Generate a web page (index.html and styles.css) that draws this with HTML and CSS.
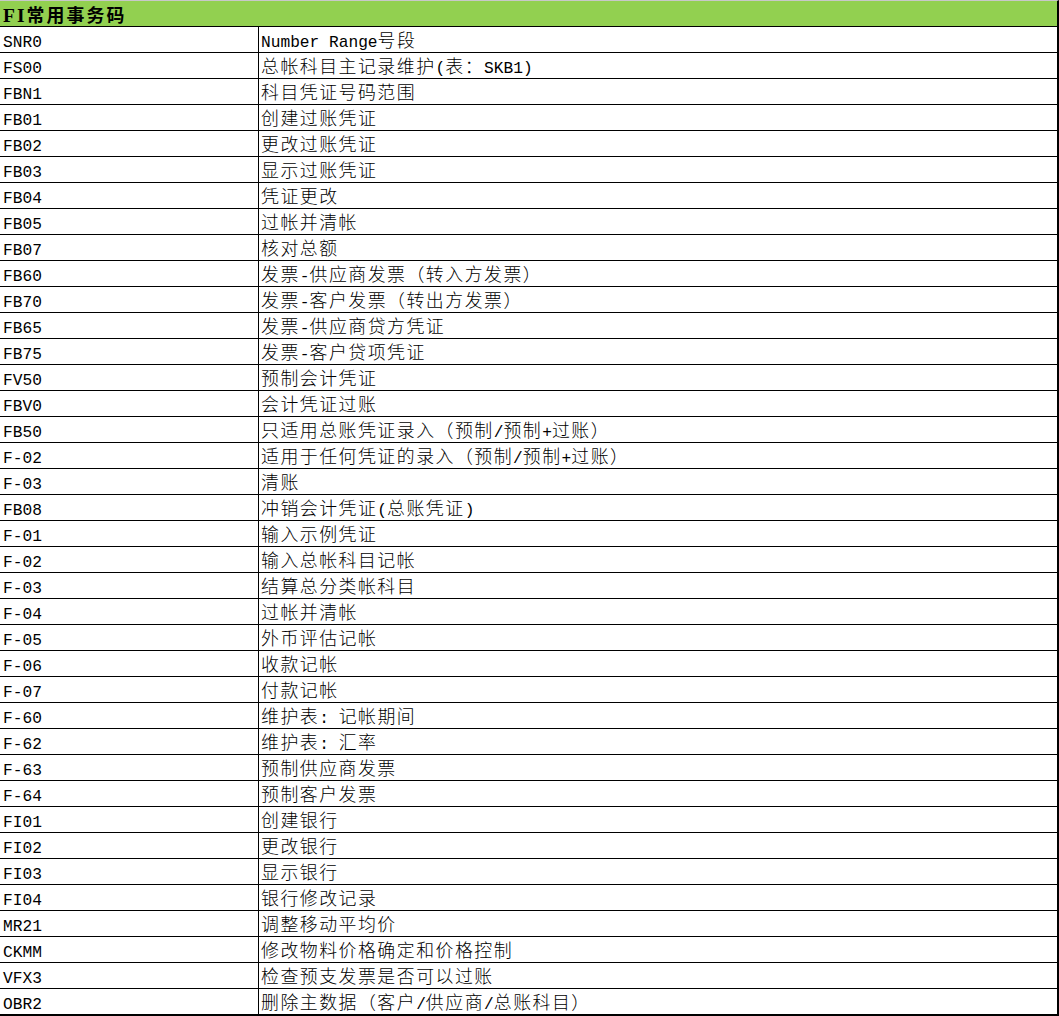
FILE: index.html
```html
<!DOCTYPE html>
<html lang="zh-CN">
<head>
<meta charset="utf-8">
<title>FI常用事务码</title>
<link rel="stylesheet" href="styles.css">
</head>
<body>
<div class="sheet">
  <div class="title"><span class="lat">FI</span>常用事务码</div>
  <div class="row"><div class="code">SNR0</div><div class="desc">Number Range<span class="z">号段</span></div></div>
  <div class="row"><div class="code">FS00</div><div class="desc"><span class="z">总帐科目主记录维护</span>(<span class="z">表：</span>SKB1)</div></div>
  <div class="row"><div class="code">FBN1</div><div class="desc"><span class="z">科目凭证号码范围</span></div></div>
  <div class="row"><div class="code">FB01</div><div class="desc"><span class="z">创建过账凭证</span></div></div>
  <div class="row"><div class="code">FB02</div><div class="desc"><span class="z">更改过账凭证</span></div></div>
  <div class="row"><div class="code">FB03</div><div class="desc"><span class="z">显示过账凭证</span></div></div>
  <div class="row"><div class="code">FB04</div><div class="desc"><span class="z">凭证更改</span></div></div>
  <div class="row"><div class="code">FB05</div><div class="desc"><span class="z">过帐并清帐</span></div></div>
  <div class="row"><div class="code">FB07</div><div class="desc"><span class="z">核对总额</span></div></div>
  <div class="row"><div class="code">FB60</div><div class="desc"><span class="z">发票</span>-<span class="z">供应商发票（转入方发票）</span></div></div>
  <div class="row"><div class="code">FB70</div><div class="desc"><span class="z">发票</span>-<span class="z">客户发票（转出方发票）</span></div></div>
  <div class="row"><div class="code">FB65</div><div class="desc"><span class="z">发票</span>-<span class="z">供应商贷方凭证</span></div></div>
  <div class="row"><div class="code">FB75</div><div class="desc"><span class="z">发票</span>-<span class="z">客户贷项凭证</span></div></div>
  <div class="row"><div class="code">FV50</div><div class="desc"><span class="z">预制会计凭证</span></div></div>
  <div class="row"><div class="code">FBV0</div><div class="desc"><span class="z">会计凭证过账</span></div></div>
  <div class="row"><div class="code">FB50</div><div class="desc"><span class="z">只适用总账凭证录入（预制</span>/<span class="z">预制</span>+<span class="z">过账）</span></div></div>
  <div class="row"><div class="code">F-02</div><div class="desc"><span class="z">适用于任何凭证的录入（预制</span>/<span class="z">预制</span>+<span class="z">过账）</span></div></div>
  <div class="row"><div class="code">F-03</div><div class="desc"><span class="z">清账</span></div></div>
  <div class="row"><div class="code">FB08</div><div class="desc"><span class="z">冲销会计凭证</span>(<span class="z">总账凭证</span>)</div></div>
  <div class="row"><div class="code">F-01</div><div class="desc"><span class="z">输入示例凭证</span></div></div>
  <div class="row"><div class="code">F-02</div><div class="desc"><span class="z">输入总帐科目记帐</span></div></div>
  <div class="row"><div class="code">F-03</div><div class="desc"><span class="z">结算总分类帐科目</span></div></div>
  <div class="row"><div class="code">F-04</div><div class="desc"><span class="z">过帐并清帐</span></div></div>
  <div class="row"><div class="code">F-05</div><div class="desc"><span class="z">外币评估记帐</span></div></div>
  <div class="row"><div class="code">F-06</div><div class="desc"><span class="z">收款记帐</span></div></div>
  <div class="row"><div class="code">F-07</div><div class="desc"><span class="z">付款记帐</span></div></div>
  <div class="row"><div class="code">F-60</div><div class="desc"><span class="z">维护表</span>: <span class="z">记帐期间</span></div></div>
  <div class="row"><div class="code">F-62</div><div class="desc"><span class="z">维护表</span>: <span class="z">汇率</span></div></div>
  <div class="row"><div class="code">F-63</div><div class="desc"><span class="z">预制供应商发票</span></div></div>
  <div class="row"><div class="code">F-64</div><div class="desc"><span class="z">预制客户发票</span></div></div>
  <div class="row"><div class="code">FI01</div><div class="desc"><span class="z">创建银行</span></div></div>
  <div class="row"><div class="code">FI02</div><div class="desc"><span class="z">更改银行</span></div></div>
  <div class="row"><div class="code">FI03</div><div class="desc"><span class="z">显示银行</span></div></div>
  <div class="row"><div class="code">FI04</div><div class="desc"><span class="z">银行修改记录</span></div></div>
  <div class="row"><div class="code">MR21</div><div class="desc"><span class="z">调整移动平均价</span></div></div>
  <div class="row"><div class="code">CKMM</div><div class="desc"><span class="z">修改物料价格确定和价格控制</span></div></div>
  <div class="row"><div class="code">VFX3</div><div class="desc"><span class="z">检查预支发票是否可以过账</span></div></div>
  <div class="row"><div class="code">OBR2</div><div class="desc"><span class="z">删除主数据（客户</span>/<span class="z">供应商</span>/<span class="z">总账科目）</span></div></div>
</div>
</body>
</html>
```

FILE: styles.css
```css
html, body {
  margin: 0;
  padding: 0;
  background: #ffffff;
}

.sheet {
  width: 1059px;
  box-sizing: border-box;
  border-top: 1px solid #c8c8c8;
  border-right: 2px solid #000000;
  border-bottom: 2px solid #000000;
  font-family: "Liberation Mono", "Noto Sans CJK SC", monospace;
  font-size: 16.2px;
  color: #000000;
  white-space: nowrap;
}

.z {
  font-family: "Noto Sans CJK SC", sans-serif;
  font-size: 17.9px;
  letter-spacing: 1.5px;
  font-weight: 300;
  line-height: 8px;
}

.title {
  height: 26px;
  box-sizing: border-box;
  background: #92d050;
  border-bottom: 1px solid #000000;
  padding: 2px 0 0 3px;
  font-family: "Noto Sans CJK SC", sans-serif;
  font-size: 17.9px;
  font-weight: 700;
  letter-spacing: 2.1px;
  line-height: 23px;
}

.title .lat {
  font-family: "Liberation Serif", serif;
  font-size: 19.5px;
  font-weight: bold;
  letter-spacing: 2px;
  line-height: 16px;
}

.row {
  display: grid;
  grid-template-columns: 259px 1fr;
  height: 26px;
  box-sizing: border-box;
  border-bottom: 1px solid #000000;
}

.row:last-child {
  border-bottom: none;
  height: 25px;
}

.code,
.desc {
  height: 25px;
  box-sizing: border-box;
  padding-top: 8.4px;
  line-height: 16.6px;
}

.code {
  padding-left: 3px;
  border-right: 1px solid #000000;
}

.desc {
  padding-left: 2px;
}
```
